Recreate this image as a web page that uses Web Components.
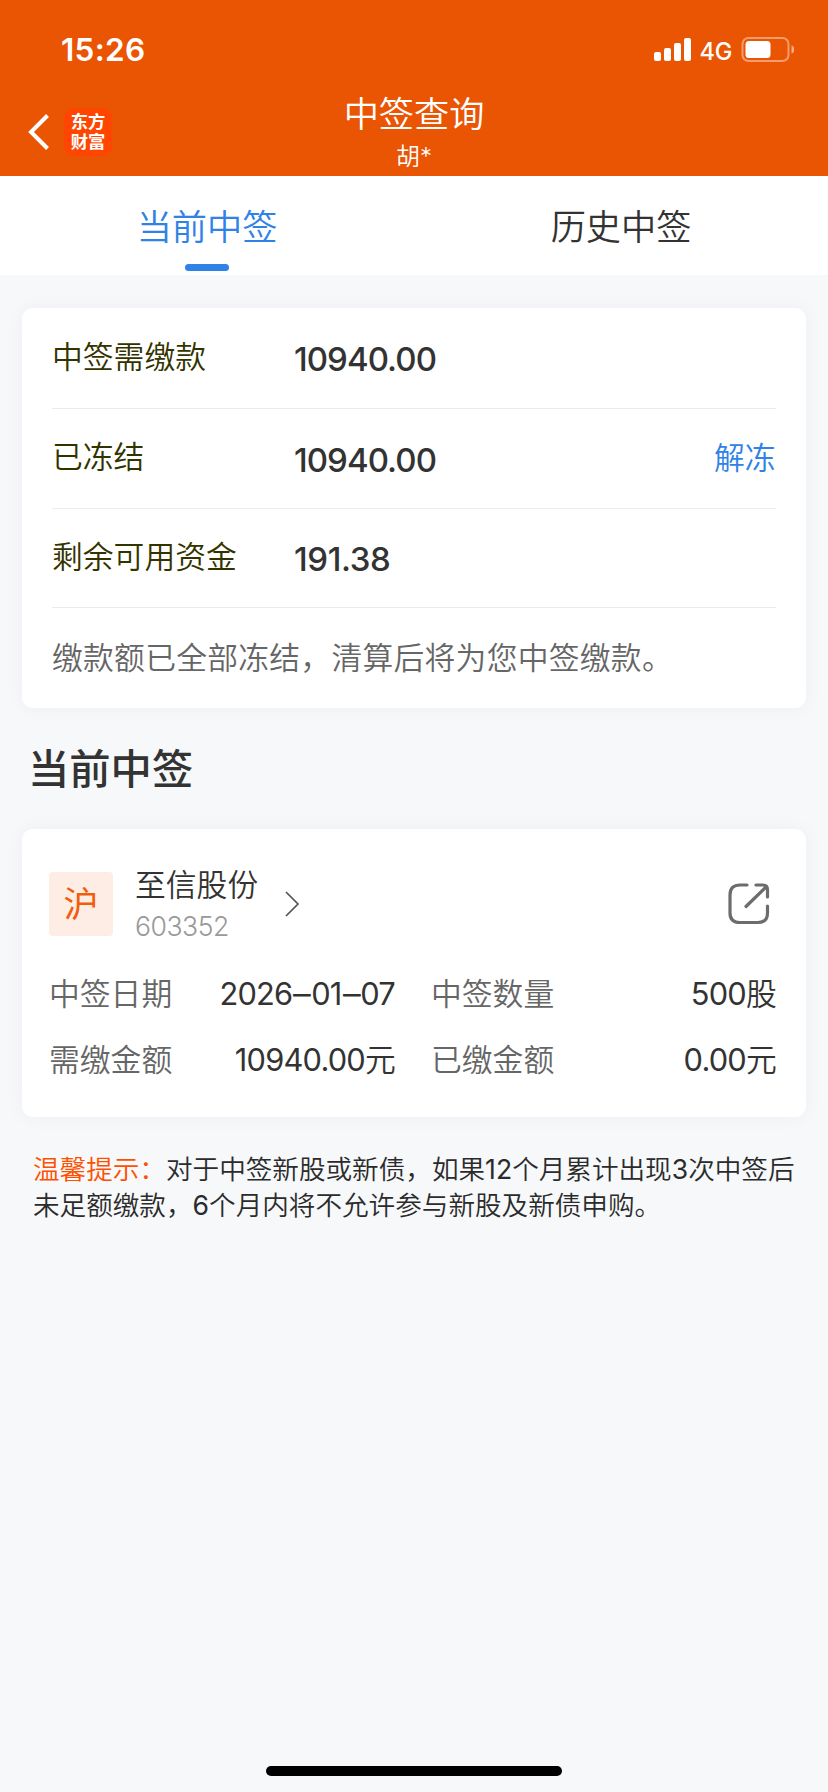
<!DOCTYPE html>
<html lang="zh-CN">
<head>
<meta charset="utf-8">
<meta name="viewport" content="width=device-width">
<title>中签查询</title>
<style>
html,body{margin:0;height:100%}
body{background:#f6f8fa;color:#333;font-family:Inter,"Noto Sans CJK SC",sans-serif;font-weight:350;overflow:hidden}
</style>
</head>
<body>
<lottery-page></lottery-page>
<script>
const define = (name, html) => {
  const t = document.createElement('template');
  t.innerHTML = html;
  customElements.define(name, class extends HTMLElement {
    constructor() {
      super();
      this.attachShadow({ mode: 'open' }).append(t.content.cloneNode(true));
    }
  });
};

define('status-bar', `
<style>
:host{display:flex;height:88px;box-sizing:border-box;padding:0 34px 0 61px;align-items:center;color:#fff}
.time{font-size:31.5px;font-weight:600;line-height:40px;margin-top:12px;flex:1;letter-spacing:.3px}
.net{font-size:23.6px;font-weight:500;line-height:30px;margin:15px 9px 0 7px;letter-spacing:-.3px}
svg{display:block;margin-top:11px}
</style>
<div class="time">15:26</div>
<svg width="38" height="25" viewBox="0 0 38 25" fill="#fff"><rect x="0" y="15" width="7" height="9" rx="2"/><rect x="10" y="11" width="7" height="13" rx="2"/><rect x="20" y="6" width="7" height="18" rx="2"/><rect x="30" y="1" width="7" height="23" rx="2"/></svg>
<div class="net">4G</div>
<svg width="53" height="25" viewBox="0 0 53 25"><rect x="1.5" y="1" width="46" height="23" rx="6" fill="none" stroke="#fff" stroke-opacity=".42" stroke-width="2"/><rect x="4.5" y="4" width="25" height="17" rx="3.5" fill="#fff"/><path d="M50.5 8.5c4 1 4 7 0 8z" fill="#fff" fill-opacity=".5"/></svg>
`);

define('nav-bar', `
<style>
:host{display:grid;grid-template-columns:1fr auto 1fr;height:88px;color:#fff;align-items:start}
.left{display:flex;align-items:center;padding:20px 0 0 28px;gap:14px}
.logo{width:48px;height:48px;box-sizing:border-box;padding-top:4px;border-radius:9px;background:#ff4600;font:700 17.3px/20.4px Roboto,"Noto Sans CJK SC",sans-serif;text-align:center}
.title{font-size:35.2px;line-height:46px;padding-top:3px;text-align:center}
.sub{font-size:24px;line-height:32px;padding-top:4px;text-align:center}
</style>
<div class="left"><svg width="22" height="36" viewBox="0 0 22 36" fill="none" stroke="#fff" stroke-width="4"><path d="M19.5 1.5 3 18 19.5 34.5"/></svg><div class="logo">东方<br>财富</div></div>
<div><div class="title">中签查询</div><div class="sub">胡*</div></div>
`);

define('tab-item', `
<style>
:host{display:flex;flex:1;flex-direction:column;align-items:center;font-size:35.2px;padding-top:7px}
:host([active]){color:#3082e6}
:host([active]) i{background:#3082e6}
.t{height:81px;line-height:89px}
i{width:44px;height:7px;border-radius:3.5px}
</style><div class="t"><slot></slot></div><i></i>
`);

define('tab-bar', `<style>:host{display:flex;height:99px;background:#fff}</style><slot></slot>`);

define('info-card', `
<style>:host{display:block;margin:0 22px;width:783.5px;box-sizing:border-box;background:#fff;border-radius:11px;box-shadow:0 0 20px rgba(40,50,60,.045)}</style><slot></slot>
`);

define('fund-row', `
<style>
:host{display:flex;box-sizing:border-box;height:100px;margin:0 30px;align-items:center;border-bottom:1px solid #ebebeb;font-size:30.8px;line-height:44px;padding-bottom:2px}
:host(:first-child){height:101px}
:host(.last){height:99px}
.l{width:242px;color:#333300;padding-bottom:1px}
.v{flex:1;font-size:33px;font-weight:500;padding-top:4px;letter-spacing:var(--track,-.95px)}
::slotted(a){color:#3082e6}
</style><div class="l"><slot name="label"></slot></div><div class="v"><slot></slot></div><slot name="action"></slot>
`);

define('stock-head', `
<style>
:host{display:flex;align-items:center;height:64px;padding:43px 36px 0 27px}
.badge{width:64px;height:64px;border-radius:4px;background:#fdede4;color:#f25c0a;font-weight:400;font-size:35px;line-height:64px;text-align:center;margin-right:22px}
.name{font-size:30.8px;line-height:40px;margin-top:0}
.code{font-size:26.6px;line-height:36px;color:#999;margin-top:3px;letter-spacing:-.5px}
.arrow{margin-left:27px;flex:1}
svg{display:block}
</style>
<div class="badge"><slot name="market"></slot></div>
<div><div class="name"><slot></slot></div><div class="code"><slot name="code"></slot></div></div>
<div class="arrow"><svg width="15" height="26" viewBox="0 0 15 26" fill="none" stroke="#555" stroke-width="1.7"><path d="M1 1 13 13 1 25"/></svg></div>
<svg width="42" height="42" viewBox="0 0 42 42" fill="none" stroke="#6c6c6c" stroke-width="3.2" stroke-linecap="round" stroke-linejoin="round"><path d="M19 2H12Q2 2 2 12V30Q2 39.5 12 39.5H30Q39.5 39.5 39.5 30V23M28 2H35Q39.5 2 39.5 6.5V14M38 4 18 23.5"/></svg>
`);

define('detail-grid', `
<style>:host{display:grid;grid-template-columns:346px 345px;column-gap:36px;grid-auto-rows:66px;padding:25px 29.5px 24px 27px}</style><slot></slot>
`);

define('detail-item', `
<style>:host{display:flex;justify-content:space-between;font-size:30.8px;line-height:66px}.l{color:#666}.v{letter-spacing:-.8px;font-weight:400}
::slotted(u){font-weight:350;text-decoration:none}
::slotted(i){display:inline-block;font-style:normal;transform:scaleX(1.15);margin:0 2.1px}</style>
<div class="l"><slot name="label"></slot></div><div class="v"><slot></slot></div>
`);

define('lottery-page', `
<style>
:host{display:flex;flex-direction:column;height:1792px;width:828px}
header{background:#ea5504;height:176px}
.note{color:#666;font-size:30.8px;line-height:100px;height:100px;padding-left:30px;letter-spacing:.25px}
h2{margin:0;font-size:41.3px;font-weight:500;line-height:123px;height:121px;padding-left:28px}
p{margin:0;padding:34px 0 0 33px;font-size:26.6px;line-height:36px;white-space:nowrap;color:#2b2b2b}
b{font-weight:inherit;color:#ff5000}
.n{font-weight:400}
.home{margin:auto auto 16px 266px;width:296px;height:10px;border-radius:5px;background:#000}
</style>
<header><status-bar></status-bar><nav-bar></nav-bar></header>
<tab-bar><tab-item active>当前中签</tab-item><tab-item>历史中签</tab-item></tab-bar>
<info-card style="margin-top:33px">
<fund-row><span slot="label">中签需缴款</span>10940.00</fund-row>
<fund-row><span slot="label">已冻结</span>10940.00<a slot="action">解冻</a></fund-row>
<fund-row class="last" style="--track:-.4px"><span slot="label">剩余可用资金</span>191.38</fund-row>
<div class="note">缴款额已全部冻结，清算后将为您中签缴款。</div>
</info-card>
<h2>当前中签</h2>
<info-card>
<stock-head><span slot="market">沪</span>至信股份<span slot="code">603352</span></stock-head>
<detail-grid>
<detail-item><span slot="label">中签日期</span>2026<i>–</i>01<i>–</i>07</detail-item>
<detail-item><span slot="label">中签数量</span>500<u>股</u></detail-item>
<detail-item><span slot="label">需缴金额</span>10940.00<u>元</u></detail-item>
<detail-item><span slot="label">已缴金额</span>0.00<u>元</u></detail-item>
</detail-grid>
</info-card>
<p><b>温馨提示：</b>对于中签新股或新债，如果<span class="n">12</span>个月累计出现<span class="n">3</span>次中签后<br>未足额缴款，<span class="n">6</span>个月内将不允许参与新股及新债申购。</p>
<div class="home"></div>
`);
</script>
</body>
</html>
